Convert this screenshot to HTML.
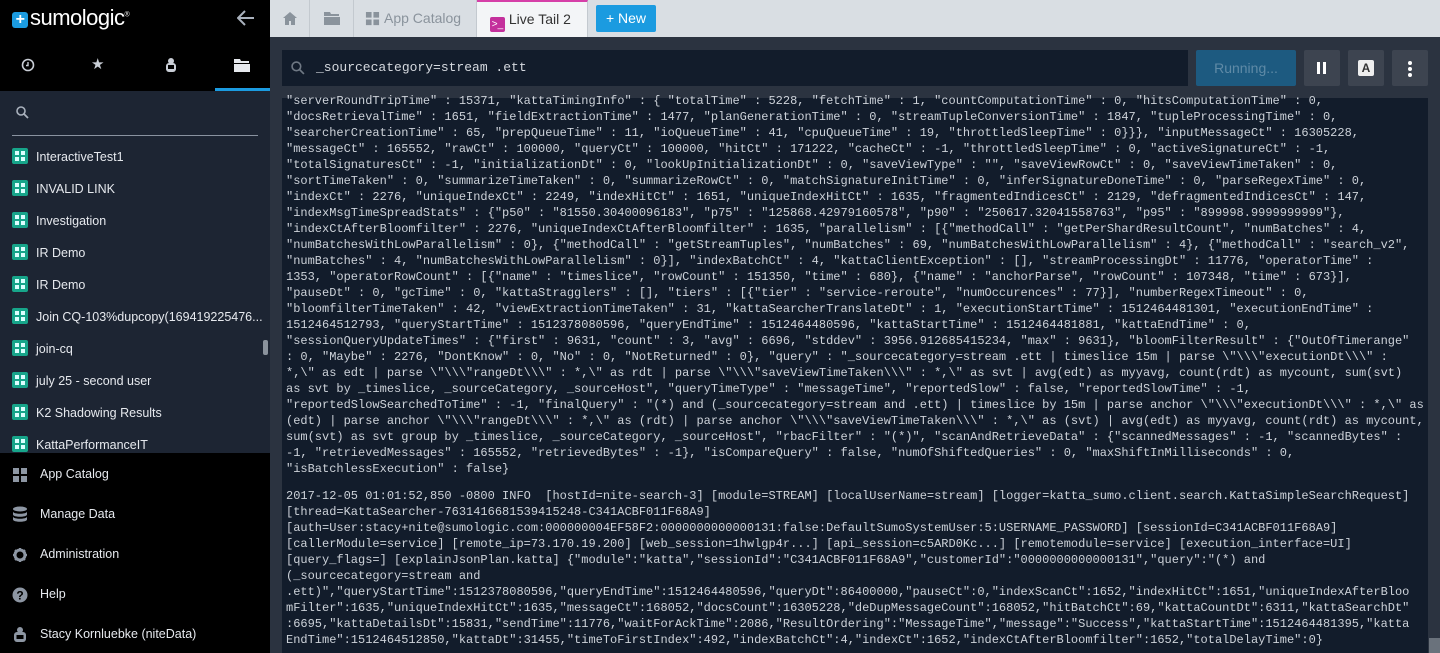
<!DOCTYPE html>
<html><head><meta charset="utf-8"><style>
*{margin:0;padding:0;box-sizing:border-box}
body{width:1440px;height:653px;overflow:hidden;background:#2b3340;font-family:"Liberation Sans",sans-serif;position:relative}
.sb{position:absolute;left:0;top:0;width:270px;height:653px;background:#000}
.logo{position:absolute;left:12px;top:5px;color:#fff;font-size:22px;letter-spacing:-0.5px}
.logo b{display:inline-block;width:16px;height:16px;background:#1b9be0;border-radius:3px;color:#fff;font-size:16px;line-height:15px;text-align:center;vertical-align:1px;margin-right:2px}
.ic{position:absolute;color:#c9ced6}
.srch{position:absolute;left:0;top:91px;width:270px;height:362px;background:#1d2533}
.srch .line{position:absolute;left:12px;top:44px;width:246px;height:1px;background:#8a93a0}
.item{position:absolute;left:12px;height:20px;color:#e6e9ee;font-size:12.5px;line-height:16px}
.item i{display:inline-block;width:16px;height:16px;background:#17a58a;border-radius:2px;vertical-align:-3px;margin-right:8px;position:relative}
.item i:before{content:"";position:absolute;left:3px;top:3px;width:4px;height:4px;background:#dff;box-shadow:6px 0 #dff,0 6px #dff,6px 6px #dff}
.menu{position:absolute;left:40px;color:#e6e9ee;font-size:12.5px}
.mi{position:absolute;left:12px}
.top{position:absolute;left:270px;top:0;width:1170px;height:37px;background:#d9dee3}
.tab{position:absolute;top:0;height:37px;border-right:1px solid #c3c9cf;color:#8a939c;font-size:14px;line-height:37px}
pre{position:absolute;left:286px;font-family:"Liberation Mono",monospace;font-size:12px;line-height:16px;color:#cdd2d9}
</style></head><body>
<div class="sb">
<div class="logo"><b>+</b>sumologic<sup style="font-size:7px">®</sup></div>
<svg style="position:absolute;left:237px;top:10px" width="18" height="16" viewBox="0 0 18 16"><path d="M17 8H2M8 1L1 8l7 7" stroke="#aab2bd" stroke-width="2" fill="none"/></svg>
<svg class="ic" style="left:21px;top:58px" width="14" height="14" viewBox="0 0 14 14"><circle cx="7" cy="7" r="5.5" fill="none" stroke="#c9ced6" stroke-width="1.6"/><path d="M7 4v3.5H5" stroke="#c9ced6" stroke-width="1.4" fill="none"/></svg>
<div class="ic" style="left:91px;top:55px;font-size:15px">★</div>
<svg class="ic" style="left:164px;top:57px" width="14" height="16" viewBox="0 0 14 16"><circle cx="7" cy="4" r="3" fill="#c9ced6"/><rect x="2" y="6" width="10" height="9" rx="3" fill="#c9ced6"/><rect x="4" y="8" width="6" height="4" fill="#000"/></svg>
<svg class="ic" style="left:234px;top:59px" width="16" height="13" viewBox="0 0 16 13"><path d="M0 0h6l1 2h8v2H0zM0 5h16v8H0z" fill="#e6e9ee"/></svg>
<div style="position:absolute;left:215px;top:88px;width:55px;height:3px;background:#1b9be0"></div>
<div class="srch"><div class="line"></div>
<svg style="position:absolute;left:16px;top:15px" width="13" height="13" viewBox="0 0 13 13"><circle cx="5" cy="5" r="4" fill="none" stroke="#aab2bd" stroke-width="1.6"/><path d="M8 8l4 4" stroke="#aab2bd" stroke-width="1.8"/></svg>
</div>
<div class="item" style="top:148px"><i></i>InteractiveTest1</div>
<div class="item" style="top:180px"><i></i>INVALID LINK</div>
<div class="item" style="top:212px"><i></i>Investigation</div>
<div class="item" style="top:244px"><i></i>IR Demo</div>
<div class="item" style="top:276px"><i></i>IR Demo</div>
<div class="item" style="top:308px"><i></i>Join CQ-103%dupcopy(169419225476...</div>
<div class="item" style="top:340px"><i></i>join-cq</div>
<div class="item" style="top:372px"><i></i>july 25 - second user</div>
<div class="item" style="top:404px"><i></i>K2 Shadowing Results</div>
<div class="item" style="top:436px"><i></i>KattaPerformanceIT</div>
<div style="position:absolute;left:263px;top:340px;width:5px;height:15px;background:#8a929c;border-radius:2px"></div>
<div style="position:absolute;left:0;top:453px;width:270px;height:200px;background:#000"></div>
<svg class="mi" style="top:467px" width="16" height="16" viewBox="0 0 16 16"><path d="M1 1h6v6H1zM9 1h6v6H9zM1 9h6v6H1zM9 9h6v6H9z" fill="#8d96a3"/></svg>
<div class="menu" style="top:467px">App Catalog</div>
<svg class="mi" style="top:506px" width="16" height="17" viewBox="0 0 16 17"><ellipse cx="8" cy="3" rx="7" ry="2.5" fill="#8d96a3"/><path d="M1 5.5c0 3 14 3 14 0v3c0 3-14 3-14 0zM1 10.5c0 3 14 3 14 0v3c0 3-14 3-14 0z" fill="#8d96a3"/></svg>
<div class="menu" style="top:507px">Manage Data</div>
<svg class="mi" style="top:547px" width="16" height="16" viewBox="0 0 16 16"><circle cx="8" cy="8" r="5" fill="none" stroke="#8d96a3" stroke-width="3"/><path d="M8 1v3M8 12v3M1 8h3M12 8h3M3 3l2 2M11 11l2 2M3 13l2-2M11 5l2-2" stroke="#8d96a3" stroke-width="2"/></svg>
<div class="menu" style="top:547px">Administration</div>
<svg class="mi" style="top:587px" width="16" height="16" viewBox="0 0 16 16"><circle cx="8" cy="8" r="7.5" fill="#8d96a3"/><text x="8" y="12.5" font-size="12" font-weight="bold" text-anchor="middle" fill="#000" font-family="Liberation Sans">?</text></svg>
<div class="menu" style="top:587px">Help</div>
<svg class="mi" style="top:626px" width="16" height="17" viewBox="0 0 16 17"><circle cx="8" cy="4" r="3" fill="#8d96a3"/><rect x="2" y="6" width="12" height="10" rx="3" fill="#8d96a3"/><rect x="4.5" y="9" width="7" height="4" fill="#000"/></svg>
<div class="menu" style="top:627px">Stacy Kornluebke (niteData)</div>
</div>
<div class="top">
<div class="tab" style="left:0;width:40px"><svg style="position:absolute;left:13px;top:12px" width="14" height="13" viewBox="0 0 14 13"><path d="M7 0L0 6h2v7h4V9h2v4h4V6h2z" fill="#8a939c"/></svg></div>
<div class="tab" style="left:40px;width:44px"><svg style="position:absolute;left:14px;top:12px" width="16" height="13" viewBox="0 0 16 13"><path d="M0 0h6l1 2h8v2H0zM0 5h16v8H0z" fill="#8a939c"/></svg></div>
<div class="tab" style="left:84px;width:123px;padding-left:30px"><svg style="position:absolute;left:11px;top:11px" width="15" height="15" viewBox="0 0 16 16"><path d="M1 1h6v6H1zM9 1h6v6H9zM1 9h6v6H1zM9 9h6v6H9z" fill="#8a939c"/></svg>App Catalog</div>
<div class="tab" style="left:207px;width:111px;background:#f3f5f7;border-top:2px solid #d63fa8;color:#333;padding-left:13px;line-height:34px"><span style="display:inline-block;width:15px;height:15px;background:#c4309c;border-radius:2px;vertical-align:-3px;color:#fff;font-size:10px;line-height:15px;text-align:center">&gt;_</span> Live Tail 2</div>
<div style="position:absolute;left:326px;top:5px;width:60px;height:27px;background:#1b9be0;color:#fff;font-size:14px;line-height:27px;text-align:center;border-radius:2px">+ New</div>
</div>
<div style="position:absolute;left:282px;top:50px;width:906px;height:36px;background:#121c2b"></div>
<svg style="position:absolute;left:291px;top:61px" width="14" height="14" viewBox="0 0 13 13"><circle cx="5" cy="5" r="4" fill="none" stroke="#6f7884" stroke-width="1.5"/><path d="M8 8l4 4" stroke="#6f7884" stroke-width="1.6"/></svg>
<div style="position:absolute;left:316px;top:60px;font-family:'Liberation Mono',monospace;font-size:13px;color:#d5d9df">_sourcecategory=stream .ett</div>
<div style="position:absolute;left:1196px;top:50px;width:100px;height:36px;background:#1d5a80;color:#5f8aa6;font-size:14px;line-height:36px;text-align:center;border-radius:2px">Running...</div>
<div style="position:absolute;left:1304px;top:50px;width:36px;height:36px;background:#3d4450;border-radius:2px"><div style="position:absolute;left:13px;top:12px;width:3px;height:12px;background:#fff"></div><div style="position:absolute;left:19px;top:12px;width:3px;height:12px;background:#fff"></div></div>
<div style="position:absolute;left:1348px;top:50px;width:36px;height:36px;background:#3d4450;border-radius:2px"><div style="margin:10px;width:16px;height:16px;background:#eee;border-radius:2px;color:#333;font-weight:bold;font-size:12px;line-height:16px;text-align:center">A</div></div>
<div style="position:absolute;left:1392px;top:50px;width:36px;height:36px;background:#3d4450;border-radius:2px"><div style="position:absolute;left:16px;top:11px;width:4px;height:4px;border-radius:2px;background:#fff;box-shadow:0 6px #fff,0 12px #fff"></div></div>
<div style="position:absolute;left:282px;top:98px;width:1146px;height:555px;background:#121c2b"></div>
<div style="position:absolute;left:1428px;top:98px;width:12px;height:555px;background:#2b3340"></div>
<div style="position:absolute;left:1429px;top:638px;width:11px;height:15px;background:#6a727c"></div>
<pre style="top:93px">"serverRoundTripTime" : 15371, "kattaTimingInfo" : { "totalTime" : 5228, "fetchTime" : 1, "countComputationTime" : 0, "hitsComputationTime" : 0,
"docsRetrievalTime" : 1651, "fieldExtractionTime" : 1477, "planGenerationTime" : 0, "streamTupleConversionTime" : 1847, "tupleProcessingTime" : 0,
"searcherCreationTime" : 65, "prepQueueTime" : 11, "ioQueueTime" : 41, "cpuQueueTime" : 19, "throttledSleepTime" : 0}}}, "inputMessageCt" : 16305228,
"messageCt" : 165552, "rawCt" : 100000, "queryCt" : 100000, "hitCt" : 171222, "cacheCt" : -1, "throttledSleepTime" : 0, "activeSignatureCt" : -1,
"totalSignaturesCt" : -1, "initializationDt" : 0, "lookUpInitializationDt" : 0, "saveViewType" : "", "saveViewRowCt" : 0, "saveViewTimeTaken" : 0,
"sortTimeTaken" : 0, "summarizeTimeTaken" : 0, "summarizeRowCt" : 0, "matchSignatureInitTime" : 0, "inferSignatureDoneTime" : 0, "parseRegexTime" : 0,
"indexCt" : 2276, "uniqueIndexCt" : 2249, "indexHitCt" : 1651, "uniqueIndexHitCt" : 1635, "fragmentedIndicesCt" : 2129, "defragmentedIndicesCt" : 147,
"indexMsgTimeSpreadStats" : {"p50" : "81550.30400096183", "p75" : "125868.42979160578", "p90" : "250617.32041558763", "p95" : "899998.9999999999"},
"indexCtAfterBloomfilter" : 2276, "uniqueIndexCtAfterBloomfilter" : 1635, "parallelism" : [{"methodCall" : "getPerShardResultCount", "numBatches" : 4,
"numBatchesWithLowParallelism" : 0}, {"methodCall" : "getStreamTuples", "numBatches" : 69, "numBatchesWithLowParallelism" : 4}, {"methodCall" : "search_v2",
"numBatches" : 4, "numBatchesWithLowParallelism" : 0}], "indexBatchCt" : 4, "kattaClientException" : [], "streamProcessingDt" : 11776, "operatorTime" :
1353, "operatorRowCount" : [{"name" : "timeslice", "rowCount" : 151350, "time" : 680}, {"name" : "anchorParse", "rowCount" : 107348, "time" : 673}],
"pauseDt" : 0, "gcTime" : 0, "kattaStragglers" : [], "tiers" : [{"tier" : "service-reroute", "numOccurences" : 77}], "numberRegexTimeout" : 0,
"bloomfilterTimeTaken" : 42, "viewExtractionTimeTaken" : 31, "kattaSearcherTranslateDt" : 1, "executionStartTime" : 1512464481301, "executionEndTime" :
1512464512793, "queryStartTime" : 1512378080596, "queryEndTime" : 1512464480596, "kattaStartTime" : 1512464481881, "kattaEndTime" : 0,
"sessionQueryUpdateTimes" : {"first" : 9631, "count" : 3, "avg" : 6696, "stddev" : 3956.912685415234, "max" : 9631}, "bloomFilterResult" : {"OutOfTimerange"
: 0, "Maybe" : 2276, "DontKnow" : 0, "No" : 0, "NotReturned" : 0}, "query" : "_sourcecategory=stream .ett | timeslice 15m | parse \"\\\"executionDt\\\" :
*,\" as edt | parse \"\\\"rangeDt\\\" : *,\" as rdt | parse \"\\\"saveViewTimeTaken\\\" : *,\" as svt | avg(edt) as myyavg, count(rdt) as mycount, sum(svt)
as svt by _timeslice, _sourceCategory, _sourceHost", "queryTimeType" : "messageTime", "reportedSlow" : false, "reportedSlowTime" : -1,
"reportedSlowSearchedToTime" : -1, "finalQuery" : "(*) and (_sourcecategory=stream and .ett) | timeslice by 15m | parse anchor \"\\\"executionDt\\\" : *,\" as
(edt) | parse anchor \"\\\"rangeDt\\\" : *,\" as (rdt) | parse anchor \"\\\"saveViewTimeTaken\\\" : *,\" as (svt) | avg(edt) as myyavg, count(rdt) as mycount,
sum(svt) as svt group by _timeslice, _sourceCategory, _sourceHost", "rbacFilter" : "(*)", "scanAndRetrieveData" : {"scannedMessages" : -1, "scannedBytes" :
-1, "retrievedMessages" : 165552, "retrievedBytes" : -1}, "isCompareQuery" : false, "numOfShiftedQueries" : 0, "maxShiftInMilliseconds" : 0,
"isBatchlessExecution" : false}</pre>
<pre style="top:488px">2017-12-05 01:01:52,850 -0800 INFO  [hostId=nite-search-3] [module=STREAM] [localUserName=stream] [logger=katta_sumo.client.search.KattaSimpleSearchRequest]
[thread=KattaSearcher-7631416681539415248-C341ACBF011F68A9]
[auth=User:stacy+nite@sumologic.com:000000004EF58F2:0000000000000131:false:DefaultSumoSystemUser:5:USERNAME_PASSWORD] [sessionId=C341ACBF011F68A9]
[callerModule=service] [remote_ip=73.170.19.200] [web_session=1hwlgp4r...] [api_session=c5ARD0Kc...] [remotemodule=service] [execution_interface=UI]
[query_flags=] [explainJsonPlan.katta] {"module":"katta","sessionId":"C341ACBF011F68A9","customerId":"0000000000000131","query":"(*) and
(_sourcecategory=stream and
.ett)","queryStartTime":1512378080596,"queryEndTime":1512464480596,"queryDt":86400000,"pauseCt":0,"indexScanCt":1652,"indexHitCt":1651,"uniqueIndexAfterBloo
mFilter":1635,"uniqueIndexHitCt":1635,"messageCt":168052,"docsCount":16305228,"deDupMessageCount":168052,"hitBatchCt":69,"kattaCountDt":6311,"kattaSearchDt"
:6695,"kattaDetailsDt":15831,"sendTime":11776,"waitForAckTime":2086,"ResultOrdering":"MessageTime","message":"Success","kattaStartTime":1512464481395,"katta
EndTime":1512464512850,"kattaDt":31455,"timeToFirstIndex":492,"indexBatchCt":4,"indexCt":1652,"indexCtAfterBloomfilter":1652,"totalDelayTime":0}</pre>
</body></html>
